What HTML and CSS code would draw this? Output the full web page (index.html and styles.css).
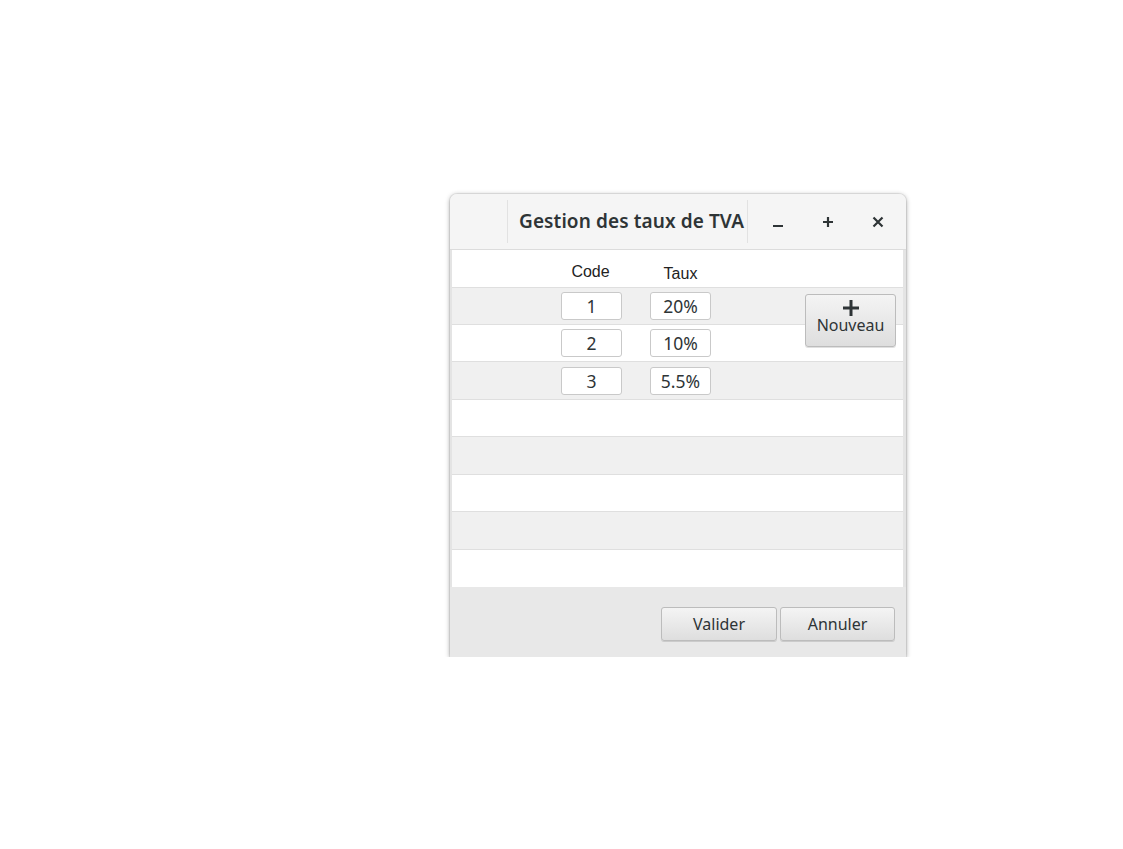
FILE: index.html
```html
<!DOCTYPE html>
<html lang="fr">
<head>
<meta charset="utf-8">
<title>Gestion des taux de TVA</title>
<link rel="stylesheet" href="styles.css">
</head>
<body>
<div class="window">
  <div class="titlebar">
    <div class="tb-blank"></div>
    <div class="tb-title">Gestion des taux de TVA</div>
    <div class="tb-buttons">
      <span class="tb-btn">
        <svg width="12" height="12" viewBox="0 0 12 12"><path d="M1 10h10" stroke="#2e3436" stroke-width="2.2"/></svg>
      </span>
      <span class="tb-btn">
        <svg width="12" height="12" viewBox="0 0 12 12"><path d="M6 1v10M1 6h10" stroke="#2e3436" stroke-width="2.2"/></svg>
      </span>
      <span class="tb-btn">
        <svg width="12" height="12" viewBox="0 0 12 12"><path d="M1.5 1.5l9 9M10.5 1.5l-9 9" stroke="#2e3436" stroke-width="2.2"/></svg>
      </span>
    </div>
  </div>
  <div class="body">
    <div class="list">
      <div class="row head">
        <span class="cell hcode">Code</span>
        <span class="cell htaux">Taux</span>
      </div>
      <div class="row odd"><span class="field">1</span><span class="field">20%</span></div>
      <div class="row"><span class="field">2</span><span class="field">10%</span></div>
      <div class="row odd"><span class="field">3</span><span class="field">5.5%</span></div>
      <div class="row"></div>
      <div class="row odd"></div>
      <div class="row"></div>
      <div class="row odd"></div>
      <div class="row last"></div>
      <button class="btn nouveau">
        <svg width="18" height="18" viewBox="0 0 18 18"><path d="M9 1v16M1 9h16" stroke="#2e3436" stroke-width="3"/></svg>
        <span>Nouveau</span>
      </button>
    </div>
    <div class="footer">
      <button class="btn action valider">Valider</button>
      <button class="btn action annuler">Annuler</button>
    </div>
  </div>
</div>
</body>
</html>
```

FILE: styles.css
```css
html, body {
  margin: 0;
  padding: 0;
  background: #ffffff;
}

body {
  font-family: "Noto Sans", "Open Sans", sans-serif;
  color: #2e3436;
}

.window {
  width: 456px;
  margin: 194px 0 0 450px;
  border-radius: 7px 7px 0 0;
  background: #f4f4f4;
  box-shadow: 0 1px 5px rgba(0, 0, 0, 0.38), 0 0 0 1px rgba(0, 0, 0, 0.06);
  overflow: hidden;
}

.titlebar {
  height: 55px;
  display: flex;
  align-items: center;
  border-bottom: 1px solid #dcdcdc;
  background: #f5f5f5;
}

.tb-blank {
  width: 57px;
  height: 43px;
  border-right: 1px solid #e2e2e2;
}

.tb-title {
  width: 228px;
  height: 43px;
  padding-left: 11px;
  border-right: 1px solid #e2e2e2;
  font-size: 19px;
  font-weight: 600;
  letter-spacing: 0.1px;
  line-height: 42px;
  color: #2e3436;
  white-space: nowrap;
  overflow: hidden;
}

.tb-buttons {
  display: flex;
  padding-left: 5px;
}

.tb-btn {
  width: 50px;
  height: 30px;
  display: flex;
  align-items: center;
  justify-content: center;
}

.body {
  background: #e4e4e4;
  padding: 0 3px 0 2px;
}

.list {
  position: relative;
  background: #ffffff;
  box-shadow: inset -3px 0 3px -2px rgba(0, 0, 0, 0.12);
}

.row {
  height: 36px;
  border-bottom: 1px solid #dfdfdf;
  display: flex;
  align-items: center;
  padding-left: 109px;
  gap: 28px;
  background: #ffffff;
}

.row.odd {
  background: #f0f0f0;
}

.row:nth-child(4),
.row:nth-child(6),
.row:nth-child(8) {
  height: 37px;
}

.row.last {
  height: 37px;
  border-bottom: none;
}

.row.head {
  height: 37px;
  align-items: flex-start;
  font-family: "Liberation Sans", Arial, sans-serif;
  font-size: 16px;
  color: #222;
}

.cell {
  width: 61px;
  text-align: center;
}

.hcode {
  padding-top: 13px;
  margin-left: -1px;
}

.htaux {
  padding-top: 15px;
  margin-left: 1px;
}

.field {
  box-sizing: border-box;
  width: 61px;
  height: 28px;
  margin-top: 0;
  border: 1px solid #c9c9c9;
  border-radius: 3px;
  background: #ffffff;
  font-size: 17.5px;
  line-height: 26px;
  text-align: center;
  color: #2e3436;
}

.btn {
  font-family: "Noto Sans", "Open Sans", sans-serif;
  font-size: 16px;
  color: #2e3436;
  border: 1px solid #bcbcbc;
  border-radius: 3px;
  background: linear-gradient(#f4f4f4, #dedede);
  box-shadow: 0 1px 0 rgba(0, 0, 0, 0.12);
  padding: 0;
  cursor: default;
}

.nouveau {
  position: absolute;
  left: 353px;
  top: 44px;
  width: 91px;
  height: 53px;
  display: flex;
  flex-direction: column;
  align-items: center;
  justify-content: flex-start;
  padding-top: 4px;
  box-sizing: border-box;
  line-height: 17px;
}

.nouveau svg {
  display: block;
}

.footer {
  height: 70px;
  background: #e8e8e8;
  display: flex;
  justify-content: flex-end;
  align-items: flex-start;
  gap: 3px;
  padding-right: 11px;
  margin: 0 -3px 0 -2px;
  box-sizing: border-box;
  padding-top: 20px;
}

.action {
  height: 34px;
  line-height: 32px;
}

.valider {
  width: 116px;
}

.annuler {
  width: 115px;
}
```
